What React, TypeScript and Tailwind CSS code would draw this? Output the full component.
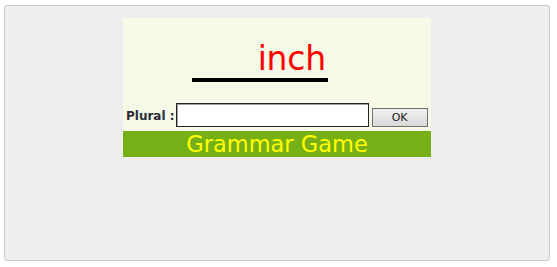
export default function App() {
  return (
    <div className="w-[557px] h-[267px] bg-white pt-[5px] pl-[4px] font-['DejaVu_Sans',sans-serif]">
      <div className="w-[546px] h-[256px] bg-[#eeeeee] border border-[#c8c8c8] rounded-[3px] pt-[12px]">
        {/* game panel */}
        <div className="w-[308px] mx-auto bg-[#f6fbe7]">
          <div className="h-[64px] flex items-end pl-[69px]">
            <div className="w-[136px] border-b-4 border-black text-right pr-[2px] pb-[1px]">
              <span className="text-[33px] leading-none text-[#ff0000] tracking-[-0.2px]">inch</span>
            </div>
          </div>

          <div className="flex items-end mt-[21px] pb-[4px] pl-[3px]">
            <label className="text-[12px] leading-[14px] font-bold text-[#2b2b3a] mb-[4px]">Plural :</label>
            <input
              type="text"
              className="ml-[1px] w-[193px] h-[24px] bg-white border border-[#222] shadow-[inset_1px_1px_0_#a0a0a0] outline-none"
            />
            <button className="ml-[3px] w-[56px] h-[19px] border border-[#707070] bg-gradient-to-b from-[#f2f2f2] to-[#d9d9d9] text-[11px] leading-none text-[#1a1a1a]">
              OK
            </button>
          </div>

          <div className="h-[26px] bg-[#77b016] text-center text-[22.5px] leading-[26px] text-[#ffff00]">
            Grammar Game
          </div>
        </div>
      </div>
    </div>
  );
}
